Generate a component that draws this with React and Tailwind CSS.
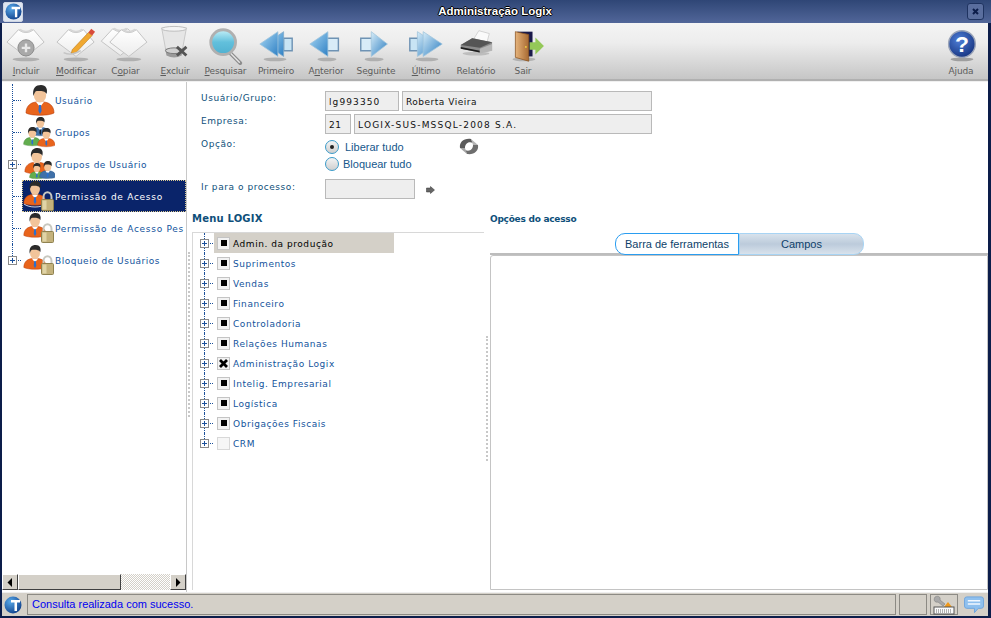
import React from "react";

/* ─── Small drawings ─────────────────────────────────────────── */

function Person({ x = 0, y = 0, s = 1, suit = "#e8641c", suit2 = "#b93a08", tie = "#2a6fd0" }) {
  return (
    <g transform={`translate(${x} ${y}) scale(${s})`}>
      <path d="M1 28 C1 20 7 17 12 17 L18 17 C23 17 29 20 29 28 C24 31 6 31 1 28 Z" fill={suit} stroke={suit2} strokeWidth="0.6" />
      <path d="M11 17 L15 22 L19 17 Z" fill="#fff" />
      <path d="M14 20 L16 20 L16.6 26 L15 29 L13.4 26 Z" fill={tie} />
      <ellipse cx="15" cy="10" rx="6.2" ry="7.5" fill="#f2c49a" />
      <path d="M8.4 11 C7 3 11 0 16 0 C21 0 23 4 21.6 9 C20 5.500 15 6 12 6 C10 6 9.500 8 8.4 11 Z" fill="#2b2b2b" />
    </g>
  );
}

function Lock({ x = 0, y = 0 }) {
  return (
    <g transform={`translate(${x} ${y})`}>
      <path d="M2.500 9 V6 C2.500 -0.5 10.500 -0.5 10.500 6 V9" fill="none" stroke="#c8c8c0" strokeWidth="2" />
      <rect x="0.500" y="8.500" width="12" height="11" rx="1" fill="#c4b27c" stroke="#8f8250" />
      <rect x="1.500" y="9.500" width="4" height="9" fill="#e0d4a6" />
    </g>
  );
}

function UserIcon() {
  return (
    <svg width="32" height="32" viewBox="0 0 32 32">
      <Person x={2} y={1} />
    </svg>
  );
}

function GroupIcon() {
  return (
    <svg width="32" height="32" viewBox="0 0 32 32">
      <Person x={8} y={1} s={0.62} suit="#3f70a8" suit2="#27507e" tie="#123" />
      <Person x={0} y={11} s={0.62} suit="#62ad4e" suit2="#3d7c2e" />
      <Person x={14} y={12} s={0.62} />
    </svg>
  );
}

function UserGroupIcon() {
  return (
    <svg width="32" height="32" viewBox="0 0 32 32">
      <Person x={1} y={0} s={0.85} />
      <Person x={6} y={15} s={0.52} suit="#62ad4e" suit2="#3d7c2e" />
      <Person x={16} y={13} s={0.58} suit="#3f70a8" suit2="#27507e" />
    </svg>
  );
}

function LockUserIcon({ light }) {
  return (
    <svg width="32" height="32" viewBox="0 0 32 32">
      <Person x={0} y={1} s={0.8} />
      {light && <path d="M1 24 C6 28 18 28 23 24" stroke="#fff" strokeWidth="0.8" fill="none" />}
      <Lock x={18} y={11} />
    </svg>
  );
}

function PlusBox() {
  return (
    <span className="absolute left-[-4px] top-1/2 -mt-[4px] w-[9px] h-[9px] bg-white border border-[#8a8a8a] flex items-center justify-center">
      <span className="relative block w-[5px] h-[1px] bg-[#1a4f9a]">
        <span className="absolute left-[2px] top-[-2px] w-[1px] h-[5px] bg-[#1a4f9a]" />
      </span>
    </span>
  );
}

function ShirtShape({ dx = 0, dy = 0, id = "shirt" }) {
  return (
    <g transform={`translate(${dx} ${dy})`}>
      <path d="M5 18 L17 5 Q25 11 33 5 L44 18 L25 33 Z" fill={`url(#${id})`} stroke="#c2c2c2" strokeWidth="1" />
      <path d="M19 4 Q25 8 31 4 L33 5 Q25 11 17 5 Z" fill="#d6d6d6" />
    </g>
  );
}

function Defs() {
  return (
    <defs>
      <linearGradient id="shirt" x1="0" y1="0" x2="0" y2="1">
        <stop offset="0" stopColor="#ffffff" />
        <stop offset="1" stopColor="#ececec" />
      </linearGradient>
      <linearGradient id="arrowL" x1="0" y1="0" x2="1" y2="1">
        <stop offset="0" stopColor="#a8d8f4" />
        <stop offset="1" stopColor="#2f80c4" />
      </linearGradient>
      <linearGradient id="arrowR" x1="0" y1="0" x2="1" y2="1">
        <stop offset="0" stopColor="#d6ecf8" />
        <stop offset="1" stopColor="#2a7cc0" />
      </linearGradient>
      <linearGradient id="lens" x1="0" y1="0" x2="0" y2="1">
        <stop offset="0" stopColor="#c4f0f8" />
        <stop offset="0.5" stopColor="#62c0dc" />
        <stop offset="1" stopColor="#4fb0d0" />
      </linearGradient>
      <radialGradient id="help" cx="0.4" cy="0.35" r="0.7">
        <stop offset="0" stopColor="#4f7fd8" />
        <stop offset="1" stopColor="#16337f" />
      </radialGradient>
      <linearGradient id="door" x1="0" y1="0" x2="1" y2="0">
        <stop offset="0" stopColor="#e6b47c" />
        <stop offset="1" stopColor="#a86a32" />
      </linearGradient>
    </defs>
  );
}

const shadow = (cx, rx) => <ellipse cx={cx} cy="36" rx={rx} ry="2" fill="#8d8d8d" opacity="0.55" />;

const TOOL_ICONS = {
  incluir: (
    <>
      {shadow(25, 14)}
      <ShirtShape />
      <circle cx="25" cy="24" r="8.500" fill="#a9a9a9" stroke="#8a8a8a" />
      <path d="M25 19.500 V28.500 M20.500 24 H29.500" stroke="#e8e8e8" strokeWidth="2.500" />
    </>
  ),
  modificar: (
    <>
      {shadow(25, 13)}
      <ShirtShape />
      <path d="M21 26 L38 8 L42 11 L25 29 L20 30 Z" fill="#f0a830" stroke="#b87818" strokeWidth="0.6" />
      <path d="M38 8 L41 4 L45 7 L42 11 Z" fill="#d84a3a" />
      <path d="M12 29 Q20 33 30 27" stroke="#c4c4c4" strokeWidth="1.500" fill="none" />
    </>
  ),
  copiar: (
    <>
      {shadow(28, 13)}
      <g transform="translate(-6 -1)">
        <ShirtShape />
      </g>
      <g transform="translate(3 0)">
        <ShirtShape />
      </g>
    </>
  ),
  excluir: (
    <>
      <path d="M11 3 H37 L32 30 Q24 34 16 30 Z" fill="#e6e6e6" stroke="#c6c6c6" />
      <ellipse cx="24" cy="4" rx="13" ry="2.500" fill="#f4f4f4" stroke="#bcbcbc" />
      <path d="M15 25 L33 25 L32 32 Q24 36 16 32 Z" fill="#9a9a9a" />
      <ellipse cx="24" cy="27" rx="9" ry="3" fill="#d0d0d0" stroke="#777" />
      <path d="M27 23 L37 32 M37 23 L27 32" stroke="#555" strokeWidth="3" />
    </>
  ),
  pesquisar: (
    <>
      <path d="M29 29 L40 40" stroke="#8d8d8d" strokeWidth="4" strokeLinecap="round" />
      <path d="M30 30 L39 39" stroke="#e4e4e4" strokeWidth="1.500" strokeLinecap="round" />
      <circle cx="22" cy="18" r="13" fill="url(#lens)" stroke="#b0b0b0" strokeWidth="3" />
    </>
  ),
  primeiro: (
    <>
      {shadow(24, 12)}
      <path d="M33 14 H42 V27 H33 Z" fill="#c8e4f4" stroke="#6f93b4" strokeWidth="1.500" />
      <path d="M14 20 L33 7 V33 Z" fill="url(#arrowL)" stroke="#7fa8c8" strokeWidth="0.8" />
      <path d="M8 20 L27 7 V33 Z" fill="url(#arrowL)" stroke="#9fc4dc" strokeWidth="0.8" />
    </>
  ),
  anterior: (
    <>
      {shadow(26, 10)}
      <path d="M25 14 H38 V27 H25 Z" fill="#d8ecf8" stroke="#6f93b4" strokeWidth="1.500" />
      <path d="M8 20 L27 7 V33 Z" fill="url(#arrowL)" stroke="#9fc4dc" strokeWidth="0.8" />
    </>
  ),
  seguinte: (
    <>
      {shadow(23, 10)}
      <path d="M9 14 H22 V27 H9 Z" fill="#d8ecf8" stroke="#6f93b4" strokeWidth="1.500" />
      <path d="M37 20 L20 7 V33 Z" fill="url(#arrowR)" stroke="#9fc4dc" strokeWidth="0.8" />
    </>
  ),
  ultimo: (
    <>
      {shadow(26, 12)}
      <path d="M8 14 H19 V27 H8 Z" fill="#c8e4f4" stroke="#6f93b4" strokeWidth="1.500" />
      <path d="M36 20 L16 7 V33 Z" fill="url(#arrowR)" stroke="#9fc4dc" strokeWidth="0.8" />
      <path d="M42 20 L22 7 V33 Z" fill="url(#arrowR)" stroke="#9fc4dc" strokeWidth="0.8" />
    </>
  ),
  relatorio: (
    <g transform="translate(-1 0)">
      <ellipse cx="26" cy="30" rx="14" ry="2" fill="#999" opacity="0.5" />
      <path d="M24 14 L29 6 L40 9 L37 20 Z" fill="#fafafa" stroke="#bbb" strokeWidth="0.6" />
      <path d="M10 21 L22 14 L43 18 L42 27 L30 29 L10 25 Z" fill="#8a8a8a" />
      <path d="M10 21 L30 24 L43 18 L22 14 Z" fill="#555" />
      <path d="M10 23 L30 27 V29 L10 25 Z" fill="#1e1e1e" />
      <path d="M30 25 L43 20 V27 L30 30 Z" fill="#b6b6b6" />
    </g>
  ),
  sair: (
    <g transform="translate(4 0)">
      <ellipse cx="22" cy="36" rx="12" ry="2" fill="#888" opacity="0.5" />
      <path d="M15 7 H31 V33 H15 Z" fill="#1a1a4a" />
      <path d="M13 7 L27 10 V38 L13 34 Z" fill="url(#door)" stroke="#8a5424" strokeWidth="0.8" />
      <circle cx="24" cy="23" r="1" fill="#f0d040" />
      <path d="M28 18 H34 V13 L43 22 L34 31 V26 H28 Z" fill="#94c858" />
    </g>
  ),
  ajuda: (
    <g transform="translate(1 0)">
      <ellipse cx="25" cy="36" rx="12" ry="2" fill="#777" opacity="0.6" />
      <circle cx="25" cy="20" r="14" fill="url(#help)" stroke="#9aa4b8" strokeWidth="1.500" />
      <text x="25" y="28" textAnchor="middle" fontFamily="Liberation Sans, sans-serif" fontWeight="700" fontSize="24" fill="#fff">?</text>
    </g>
  ),
};

function TLogo({ size = 18, id = "logo" }) {
  return (
    <svg width={size} height={size} viewBox="0 0 18 18">
      <defs>
        <radialGradient id={id} cx="0.35" cy="0.3" r="0.8">
          <stop offset="0" stopColor="#58a8e8" />
          <stop offset="1" stopColor="#0c3c88" />
        </radialGradient>
      </defs>
      <circle cx="9" cy="9" r="8.500" fill={`url(#${id})`} />
      <path d="M7 4 H16 V6.500 H13 V15 H10.500 V6.500 H7 Z" fill="#fff" />
    </svg>
  );
}

/* ─── Data ───────────────────────────────────────────────────── */

const TOOLS = [
  { key: "incluir", pre: "", ul: "I", post: "ncluir", w: "w-[50px] -ml-[1px]" },
  { key: "modificar", pre: "", ul: "M", post: "odificar", w: "w-[50px]" },
  { key: "copiar", pre: "C", ul: "o", post: "piar", w: "w-[49px]" },
  { key: "excluir", pre: "", ul: "E", post: "xcluir", w: "w-[50px]" },
  { key: "pesquisar", pre: "", ul: "P", post: "esquisar", w: "w-[51px]" },
  { key: "primeiro", pre: "Primeiro", ul: "", post: "", w: "w-[50px]" },
  { key: "anterior", pre: "A", ul: "n", post: "terior", w: "w-[50px]" },
  { key: "seguinte", pre: "Se", ul: "g", post: "uinte", w: "w-[50px]" },
  { key: "ultimo", pre: "", ul: "Ú", post: "ltimo", w: "w-[50px]" },
  { key: "relatorio", pre: "Relatório", ul: "", post: "", w: "w-[50px]" },
  { key: "sair", pre: "Sair", ul: "", post: "", w: "w-[44px]" },
];

const SIDE_ITEMS = [
  { label: "Usuário", icon: <UserIcon /> },
  { label: "Grupos", icon: <GroupIcon /> },
  { label: "Grupos de Usuário", icon: <UserGroupIcon />, plus: true },
  { label: "Permissão de Acesso", icon: <LockUserIcon light />, selected: true, wide: true },
  { label: "Permissão de Acesso Pes", icon: <LockUserIcon />, wide: true },
  { label: "Bloqueio de Usuários", icon: <LockUserIcon />, plus: true, last: true },
];

const MENU_ITEMS = [
  { label: "Admin. da produção", mark: "square", selected: true },
  { label: "Suprimentos", mark: "square" },
  { label: "Vendas", mark: "square" },
  { label: "Financeiro", mark: "square" },
  { label: "Controladoria", mark: "square" },
  { label: "Relações Humanas", mark: "square" },
  { label: "Administração Logix", mark: "x" },
  { label: "Intelig. Empresarial", mark: "square" },
  { label: "Logística", mark: "square" },
  { label: "Obrigações Fiscais", mark: "square" },
  { label: "CRM", mark: "none", last: true },
];

const DEJA = "font-['DejaVu_Sans',sans-serif] text-[9px]";
const ARIAL = "font-['Liberation_Sans',Arial,sans-serif]";
const LABEL = `${DEJA} tracking-[0.55px] w-[124px] text-[#0e4f7a] leading-[14px]`;

/* ─── Pieces ─────────────────────────────────────────────────── */

function ToolButton({ tool }) {
  return (
    <div className={`${tool.w} shrink-0 flex flex-col items-center`}>
      <svg width="50" height="40" viewBox="0 0 50 42" className="shrink-0 overflow-visible">
        {TOOL_ICONS[tool.key]}
      </svg>
      <span className={`${DEJA} whitespace-nowrap text-[#5c5c5c] leading-[12px] tracking-[-0.15px]`}>
        {tool.pre}
        {tool.ul && <span className="underline">{tool.ul}</span>}
        {tool.post}
      </span>
    </div>
  );
}

function SideRow({ item }) {
  return (
    <div className="h-[32px] flex shrink-0">
      <div className="relative w-[20px] shrink-0">
        <div className={`absolute left-[10px] top-0 border-l border-dotted border-[#1a4f9a] ${item.last ? "h-1/2" : "h-full"}`} />
        <div className="absolute left-[11px] top-1/2 w-[8px] border-t border-dotted border-[#1a4f9a]" />
        {item.plus && (
          <span className="absolute left-[10px] top-0 h-full">
            <PlusBox />
          </span>
        )}
      </div>
      <div className={`flex-1 min-w-0 flex items-center overflow-hidden ${item.selected ? "bg-[#0a246a] outline-1 outline-dotted outline-offset-[-1px] outline-[#d8c890]" : ""}`}>
        <span className="w-[32px] shrink-0 ml-[1px] flex">{item.icon}</span>
        <span className={`${DEJA} ${item.wide ? "tracking-[0.72px]" : "tracking-[0.5px]"} pt-[3px] whitespace-nowrap ${item.selected ? "text-white" : "text-[#12539c]"}`}>{item.label}</span>
      </div>
    </div>
  );
}

function Mark({ type }) {
  return (
    <span className={`w-[13px] h-[13px] shrink-0 border flex items-center justify-center ${type === "none" ? "border-[#d8d8d8] bg-[#f6f6f6]" : "border-[#c4c4c4] bg-[#f2f2f2]"}`}>
      {type === "square" && <span className="w-[6px] h-[6px] bg-black" />}
      {type === "x" && (
        <svg width="11" height="11" viewBox="0 0 11 11">
          <path d="M2 2 L9 9 M9 2 L2 9" stroke="#000" strokeWidth="2.800" />
        </svg>
      )}
    </span>
  );
}

function MenuRow({ item }) {
  return (
    <div className="h-[20px] flex shrink-0">
      <div className="relative w-[21px] shrink-0">
        <div className={`absolute left-[11px] top-0 border-l border-dotted border-[#1a4f9a] ${item.last ? "h-1/2" : "h-full"}`} />
        <div className="absolute left-[12px] top-1/2 w-[8px] border-t border-dotted border-[#1a4f9a]" />
        <span className="absolute left-[11px] top-0 h-full">
          <PlusBox />
        </span>
      </div>
      <div className={`w-[180px] flex items-center pl-[3px] ${item.selected ? "bg-[#d4d0c8]" : ""}`}>
        <Mark type={item.mark} />
        <span className={`${DEJA} tracking-[0.55px] pt-[3px] ml-[3px] whitespace-nowrap ${item.selected ? "text-black" : "text-[#12539c]"}`}>{item.label}</span>
      </div>
    </div>
  );
}

function Field({ w, track = "tracking-[0.5px]", children }) {
  return (
    <div className={`${w} shrink-0 h-[20px] bg-[#eeeeee] border border-[#b9b9b9] flex items-center pl-[3px] pt-[3px] ${DEJA} ${track} text-[#111] whitespace-nowrap overflow-hidden`}>
      {children}
    </div>
  );
}

function Radio({ checked }) {
  return (
    <span className="w-[14px] h-[14px] shrink-0 rounded-full border border-[#3a9ac8] bg-[linear-gradient(#f4f4f4,#cfcfcf)] flex items-center justify-center">
      {checked && <span className="w-[4px] h-[4px] rounded-full bg-[#222]" />}
    </span>
  );
}

function ScrollArrow({ left }) {
  return (
    <span className="w-[16px] h-[16px] shrink-0 bg-[#d4d0c8] border border-t-white border-l-white border-r-[#404040] border-b-[#404040] flex items-center justify-center">
      <svg width="6" height="9" viewBox="0 0 6 9">
        <path d={left ? "M5 0 L0.500 4.500 L5 9 Z" : "M1 0 L5.500 4.500 L1 9 Z"} fill="#000" />
      </svg>
    </span>
  );
}

function Grip({ className = "" }) {
  return <div className={`w-[2px] border-l-2 border-dotted border-[#c8c8c8] ${className}`} />;
}

/* ─── Page ───────────────────────────────────────────────────── */

export default function App() {
  return (
    <div className={`w-[991px] h-[618px] flex flex-col overflow-hidden bg-[#0c1d4a] ${ARIAL}`}>
      {/* Title bar */}
      <div className="h-[23px] shrink-0 flex items-center bg-[linear-gradient(#2f4676,#516699)] pl-[3px] pr-[7px]">
        <div className="w-[20px] h-[20px] border border-[#cfd6e4] rounded-[2px] flex items-center justify-center bg-[#dfe6f0]">
          <TLogo size={17} id="logoTop" />
        </div>
        <div className="flex-1 text-center text-white font-bold text-[11.5px] leading-[20px] pb-[1px] [text-shadow:1px_0_0_#000,-1px_0_0_#000,0_1px_0_#000,0_-1px_0_#000]">
          Administração Logix
        </div>
        <div className="w-[17px] h-[17px] rounded-[3px] border border-[#1f3360] bg-[#5a6e9e] flex items-center justify-center">
          <svg width="7" height="7" viewBox="0 0 7 7">
            <path d="M1 1 L6 6 M6 1 L1 6" stroke="#0c1d4a" strokeWidth="2" />
          </svg>
        </div>
      </div>

      <div className="flex-1 min-h-0 flex flex-col ml-[2px] mr-[3px]">
        {/* Toolbar */}
        <div className="h-[58px] shrink-0 bg-[linear-gradient(#f4f4f4,#ededed_35%,#c6c6c6)] border-b-2 border-[#b0b0b0] flex pt-[2px] pr-[2px]">
          <svg width="0" height="0" className="absolute">
            <Defs />
          </svg>
          {TOOLS.map((t) => (
            <ToolButton key={t.key} tool={t} />
          ))}
          <div className="flex-1" />
          <ToolButton tool={{ key: "ajuda", pre: "Ajuda", ul: "", post: "", w: "w-[50px]" }} />
        </div>

        {/* Main */}
        <div className="flex-1 min-h-0 flex bg-white border-t border-[#f0f0f0]">
          {/* Left tree */}
          <div className="w-[185px] shrink-0 flex flex-col border-r border-[#c8c8c8]">
            <div className="flex-1 min-h-0 flex flex-col pt-[2px] overflow-hidden">
              {SIDE_ITEMS.map((item) => (
                <SideRow key={item.label} item={item} />
              ))}
            </div>
            <div className="h-[16px] mb-[2px] shrink-0 flex bg-[repeating-conic-gradient(#d4d0c8_0_25%,#ffffff_0_50%)] bg-[length:2px_2px]">
              <ScrollArrow left />
              <div className="w-[103px] h-full bg-[#d4d0c8] border border-t-white border-l-white border-r-[#404040] border-b-[#404040]" />
              <div className="flex-1" />
              <ScrollArrow />
            </div>
          </div>

          {/* Right side */}
          <div className="flex-1 min-w-0 flex flex-col relative">
            {/* Form */}
            <div className="shrink-0 h-[128px] flex flex-col pt-[9px] pl-[14px]">
              <div className="flex items-start h-[23px]">
                <span className={LABEL}>Usuário/Grupo:</span>
                <div className="flex gap-[3px]">
                  <Field w="w-[74px]" track="tracking-[1.1px]">lg993350</Field>
                  <Field w="w-[250px]">Roberta Vieira</Field>
                </div>
              </div>
              <div className="flex items-start h-[26px]">
                <span className={LABEL}>Empresa:</span>
                <div className="flex gap-[3px]">
                  <Field w="w-[26px]">21</Field>
                  <Field w="w-[298px]" track="tracking-[1.2px]">LOGIX-SUS-MSSQL-2008 S.A.</Field>
                </div>
              </div>
              <div className="flex items-start h-[40px]">
                <span className={`${LABEL} mt-[-3px]`}>Opção:</span>
                <div className="flex flex-col gap-[3px] w-[100px]">
                  <label className="flex items-center h-[14px] gap-[6px] text-[11px] text-[#15578c]">
                    <Radio checked />
                    Liberar tudo
                  </label>
                  <label className="flex items-center h-[14px] gap-[4px] text-[11px] text-[#15578c]">
                    <Radio />
                    Bloquear tudo
                  </label>
                </div>
                <svg width="20" height="19" viewBox="0 0 20 19" className="ml-[34px] -mt-[3px]">
                  <path d="M1 11 C0 5 5 1 12 2 L14 6 C9 4 6 7 6 11 Z" fill="#5a5a5a" />
                  <path d="M19 8 C20 14 15 18 8 17 L6 13 C11 15 14 12 14 8 Z" fill="#6e6e6e" />
                  <path d="M12 2 L19 8 L14 8 Z" fill="#b4b4b4" />
                  <path d="M1 11 L6 11 L8 17 Z" fill="#a4a4a4" />
                </svg>
              </div>
              <div className="flex items-start">
                <span className={LABEL}>Ir para o processo:</span>
                <div className="w-[90px] h-[20px] bg-[#eeeeee] border border-[#b9b9b9] -mt-[1px]" />
                <svg width="9" height="8" viewBox="0 0 9 8" className="ml-[11px] mt-[6px]">
                  <path d="M0.500 2 H4.500 V0.500 L8.500 4 L4.500 7.500 V6 H0.500 Z" fill="#666" stroke="#333" strokeWidth="0.5" />
                </svg>
              </div>
            </div>

            {/* Lower panes */}
            <div className="flex-1 min-h-0 flex">
              <div className="w-[303px] shrink-0 flex flex-col pl-[5px] pr-[6px] pb-[2px]">
                <div className="h-[22px] shrink-0 text-[10px] font-bold tracking-[0.2px] text-[#0e4f7a] leading-[18px] font-['DejaVu_Sans',sans-serif]">Menu LOGIX</div>
                <div className="flex-1 min-h-0 flex flex-col border-t border-l border-[#d8d8d8]">
                  {MENU_ITEMS.map((item) => (
                    <MenuRow key={item.label} item={item} />
                  ))}
                </div>
              </div>
              <div className="flex-1 min-w-0 flex flex-col">
                <div className="h-[23px] shrink-0 text-[9px] font-bold tracking-[-0.25px] text-[#0e4f7a] leading-[18px] font-['DejaVu_Sans',sans-serif]">Opções do acesso</div>
                <div className="h-[22px] shrink-0 ml-[125px] flex text-[11px] text-[#0e3f6a] relative z-10">
                  <div className="w-[124px] h-full bg-white border border-[#2a9df0] rounded-l-[10px] flex items-center justify-center">Barra de ferramentas</div>
                  <div className="w-[125px] h-full bg-[linear-gradient(#d8e2ec,#bccbdb_50%,#d8e2ec)] border border-[#a8d4f4] rounded-r-[10px] flex items-center justify-center">Campos</div>
                </div>
                <div className="h-[2px] shrink-0 -mt-[2px] bg-[#bdbdbd]" />
                <div className="flex-1 min-h-0 border border-[#c4c4c4] rounded-tl-[3px] mb-[2px]" />
              </div>
            </div>

            {/* Split grips */}
            <Grip className="absolute left-[1px] top-[170px] h-[165px]" />
            <Grip className="absolute left-[299px] top-[254px] h-[125px]" />
          </div>
        </div>

        {/* Status bar */}
        <div className="h-[24px] shrink-0 bg-[#d4d0c8] border-t border-[#efefef] flex items-center gap-[3px] pl-[2px] pr-[4px]">
          <span className="w-[20px] shrink-0 flex">
            <TLogo size={18} id="logoBottom" />
          </span>
          <div className="flex-1 h-[21px] border border-[#8c8a84] flex items-center pl-[4px] text-[11px] text-[#0000f0] whitespace-nowrap">Consulta realizada com sucesso.</div>
          <div className="w-[28px] h-[21px] shrink-0 border border-[#8c8a84]" />
          <div className="w-[28px] h-[21px] shrink-0 border border-[#8c8a84] flex items-center justify-center">
            <svg width="24" height="20" viewBox="0 0 24 20">
              <path d="M3 2 C6 0 9 2 8 5 L13 9 L11 11 L6 7 C3 8 1 5 3 2 Z" fill="#a8a8a8" stroke="#777" strokeWidth="0.5" />
              <path d="M12 12 L16 7 L20 12 Z" fill="#f09818" />
              <rect x="2" y="12" width="20" height="7" fill="#fafafa" stroke="#555" />
              <path d="M4 15 H20 M4 17 H20" stroke="#666" strokeDasharray="1 1" />
            </svg>
          </div>
          <span className="ml-[3px] w-[20px] shrink-0 flex">
            <svg width="21" height="18" viewBox="0 0 21 18">
              <path d="M3 0.500 H18 Q20.500 0.500 20.500 3 V10 Q20.500 12.500 18 12.500 H15 L11 17 V12.500 H3 Q0.500 12.500 0.500 10 V3 Q0.500 0.500 3 0.500 Z" fill="#8fc0ee" stroke="#6ea4dc" />
              <path d="M4 4.500 H17 M4 8 H17" stroke="#f2f8ff" strokeWidth="1.500" />
            </svg>
          </span>
        </div>
      </div>
      <div className="h-[2px] shrink-0" />
    </div>
  );
}
